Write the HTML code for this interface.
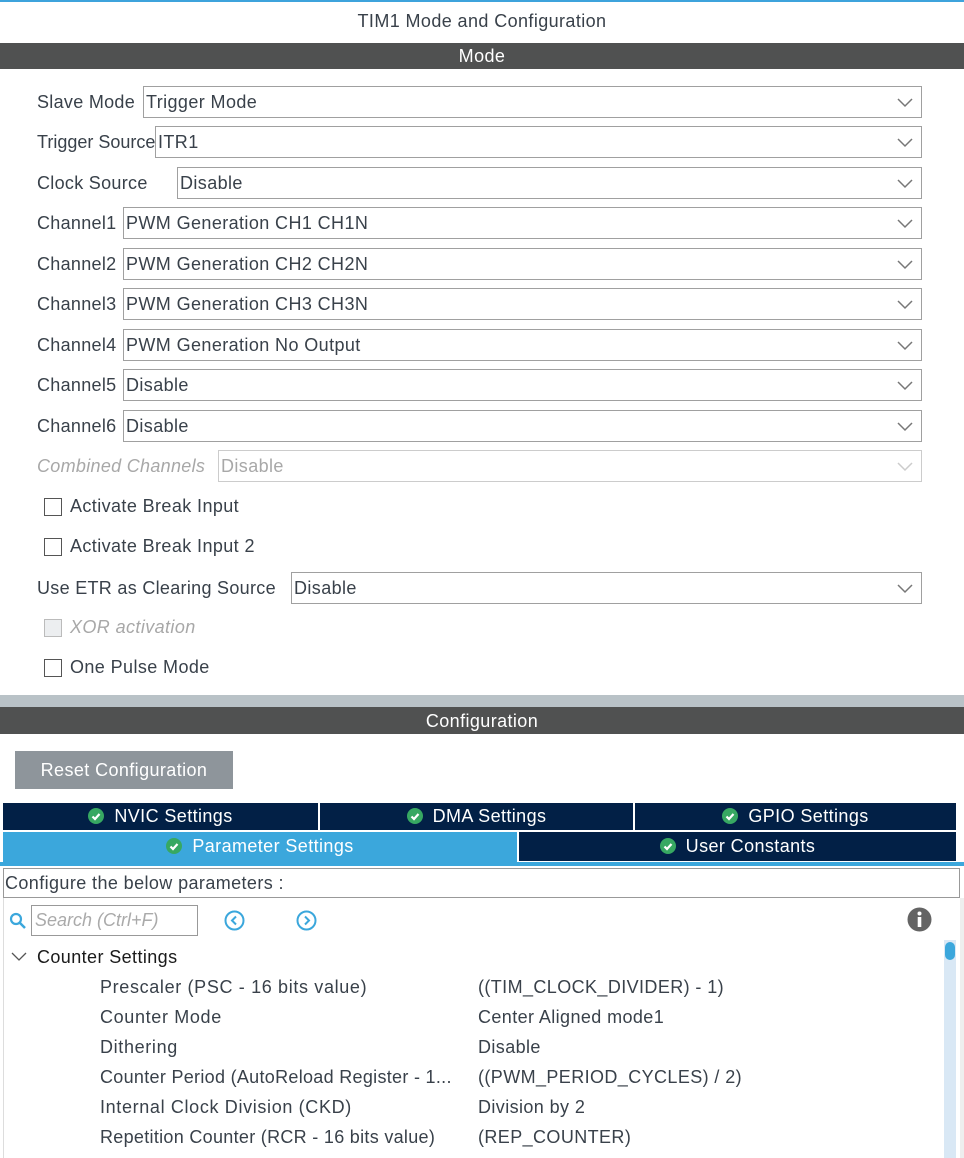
<!DOCTYPE html>
<html><head><meta charset="utf-8"><style>
*{margin:0;padding:0;box-sizing:border-box}
body{width:964px;height:1158px;background:#fff;position:relative;overflow:hidden;font-family:"Liberation Sans",Arial,sans-serif;color:#39414a;font-size:18px;letter-spacing:.4px}
.a{position:absolute;white-space:nowrap}
.lbl{position:absolute;left:37px;line-height:32px;white-space:nowrap;letter-spacing:.3px}
.sel{position:absolute;height:32px;right:42px;border:1px solid #a0a0a0;background:#fff;line-height:30px;padding-left:2px}
.sel svg{position:absolute;right:8px;top:11px}
.dis{color:#a8a8a8}
.cb{position:absolute;left:44px;width:18px;height:18px;border:1.5px solid #555;background:#fff}
.bar{position:absolute;left:0;width:964px;background:#505151;color:#fff;text-align:center}
.tab{position:absolute;background:#022046;color:#fff;text-align:center;height:27px;line-height:27px}
.ck{display:inline-block;width:16px;height:16px;vertical-align:-2px;margin-right:10px;position:relative}
.ck svg{position:absolute;left:0;top:0}
.row{position:absolute;left:100px;line-height:30px;letter-spacing:.65px}
.val{position:absolute;left:478px;line-height:30px;letter-spacing:.4px}
</style></head><body>
<div class="a" style="left:0;top:0;width:964px;height:2px;background:#3ea3dc"></div>
<div class="a" style="left:0;top:11px;width:964px;text-align:center;color:#39414a">TIM1 Mode and Configuration</div>
<div class="bar" style="top:43px;height:26px;line-height:26px">Mode</div>

<div class="lbl" style="top:86px">Slave Mode</div><div class="sel" style="top:86px;left:143px">Trigger Mode<svg width="16" height="10"><path d="M1 1l7 7 7-7" fill="none" stroke="#777" stroke-width="1.5"/></svg></div>
<div class="lbl" style="top:126px;letter-spacing:0">Trigger Source</div><div class="sel" style="top:126px;left:155px">ITR1<svg width="16" height="10"><path d="M1 1l7 7 7-7" fill="none" stroke="#777" stroke-width="1.5"/></svg></div>
<div class="lbl" style="top:167px">Clock Source</div><div class="sel" style="top:167px;left:177px">Disable<svg width="16" height="10"><path d="M1 1l7 7 7-7" fill="none" stroke="#777" stroke-width="1.5"/></svg></div>
<div class="lbl" style="top:207px">Channel1</div><div class="sel" style="top:207px;left:123px">PWM Generation CH1 CH1N<svg width="16" height="10"><path d="M1 1l7 7 7-7" fill="none" stroke="#777" stroke-width="1.5"/></svg></div>
<div class="lbl" style="top:248px">Channel2</div><div class="sel" style="top:248px;left:123px">PWM Generation CH2 CH2N<svg width="16" height="10"><path d="M1 1l7 7 7-7" fill="none" stroke="#777" stroke-width="1.5"/></svg></div>
<div class="lbl" style="top:288px">Channel3</div><div class="sel" style="top:288px;left:123px">PWM Generation CH3 CH3N<svg width="16" height="10"><path d="M1 1l7 7 7-7" fill="none" stroke="#777" stroke-width="1.5"/></svg></div>
<div class="lbl" style="top:329px">Channel4</div><div class="sel" style="top:329px;left:123px">PWM Generation No Output<svg width="16" height="10"><path d="M1 1l7 7 7-7" fill="none" stroke="#777" stroke-width="1.5"/></svg></div>
<div class="lbl" style="top:369px">Channel5</div><div class="sel" style="top:369px;left:123px">Disable<svg width="16" height="10"><path d="M1 1l7 7 7-7" fill="none" stroke="#777" stroke-width="1.5"/></svg></div>
<div class="lbl" style="top:410px">Channel6</div><div class="sel" style="top:410px;left:123px">Disable<svg width="16" height="10"><path d="M1 1l7 7 7-7" fill="none" stroke="#777" stroke-width="1.5"/></svg></div>
<div class="lbl dis" style="top:450px;font-style:italic">Combined Channels</div><div class="sel dis" style="top:450px;left:218px;border-color:#ccc">Disable<svg width="16" height="10"><path d="M1 1l7 7 7-7" fill="none" stroke="#ccc" stroke-width="1.5"/></svg></div>

<div class="cb" style="top:498px"></div><div class="a" style="left:70px;top:496px">Activate Break Input</div>
<div class="cb" style="top:538px"></div><div class="a" style="left:70px;top:536px">Activate Break Input 2</div>
<div class="lbl" style="top:572px">Use ETR as Clearing Source</div><div class="sel" style="top:572px;left:291px">Disable<svg width="16" height="10"><path d="M1 1l7 7 7-7" fill="none" stroke="#777" stroke-width="1.5"/></svg></div>
<div class="cb" style="top:619px;border-color:#bbb;background:#eceef0"></div><div class="a dis" style="left:70px;top:617px;font-style:italic">XOR activation</div>
<div class="cb" style="top:659px"></div><div class="a" style="left:70px;top:657px">One Pulse Mode</div>

<div class="a" style="left:0;top:695px;width:964px;height:12px;background:#b9c2c7"></div>
<div class="bar" style="top:707px;height:27px;line-height:28px">Configuration</div>
<div class="a" style="left:15px;top:751px;width:218px;height:38px;background:#8e959b;color:#fff;line-height:38px;text-align:center">Reset Configuration</div>

<div class="tab" style="left:3px;top:803px;width:315px"><span class="ck"><svg width="16" height="16"><circle cx="8" cy="8" r="8" fill="#37a862"/><path d="M4.5 8.5l2.5 2.5 4.5-5" fill="none" stroke="#fff" stroke-width="2.2"/></svg></span>NVIC Settings</div>
<div class="tab" style="left:320px;top:803px;width:313px"><span class="ck"><svg width="16" height="16"><circle cx="8" cy="8" r="8" fill="#37a862"/><path d="M4.5 8.5l2.5 2.5 4.5-5" fill="none" stroke="#fff" stroke-width="2.2"/></svg></span>DMA Settings</div>
<div class="tab" style="left:635px;top:803px;width:321px"><span class="ck"><svg width="16" height="16"><circle cx="8" cy="8" r="8" fill="#37a862"/><path d="M4.5 8.5l2.5 2.5 4.5-5" fill="none" stroke="#fff" stroke-width="2.2"/></svg></span>GPIO Settings</div>
<div class="tab" style="left:3px;top:832px;width:514px;height:31px;line-height:29px;background:#3ba7dc"><span class="ck"><svg width="16" height="16"><circle cx="8" cy="8" r="8" fill="#37a862"/><path d="M4.5 8.5l2.5 2.5 4.5-5" fill="none" stroke="#fff" stroke-width="2.2"/></svg></span>Parameter Settings</div>
<div class="tab" style="left:519px;top:832px;width:437px;height:29px;line-height:29px"><span class="ck"><svg width="16" height="16"><circle cx="8" cy="8" r="8" fill="#37a862"/><path d="M4.5 8.5l2.5 2.5 4.5-5" fill="none" stroke="#fff" stroke-width="2.2"/></svg></span>User Constants</div>
<div class="a" style="left:0;top:862px;width:964px;height:4px;background:#3ba7dc"></div>

<div class="a" style="left:3px;top:868px;width:957px;height:30px;border:1px solid #999;line-height:28px;padding-left:1px">Configure the below parameters :</div>
<div class="a" style="left:3px;top:898px;width:1px;height:260px;background:#ddd"></div>
<svg class="a" style="left:9px;top:912px" width="18" height="18"><circle cx="7" cy="7" r="5" fill="none" stroke="#3ba7dc" stroke-width="2.2"/><path d="M11 11l5 5" stroke="#3ba7dc" stroke-width="2.5"/></svg>
<div class="a" style="left:31px;top:905px;width:167px;height:31px;border:1.5px solid #999;color:#aaa;font-style:italic;line-height:28px;padding-left:3px;letter-spacing:0">Search (Ctrl+F)</div>
<svg class="a" style="left:224px;top:910px" width="21" height="21"><circle cx="10.5" cy="10.5" r="9" fill="none" stroke="#3ba7dc" stroke-width="2"/><path d="M12 6.5l-4 4 4 4" fill="none" stroke="#3ba7dc" stroke-width="2"/></svg>
<svg class="a" style="left:296px;top:910px" width="21" height="21"><circle cx="10.5" cy="10.5" r="9" fill="none" stroke="#3ba7dc" stroke-width="2"/><path d="M9 6.5l4 4-4 4" fill="none" stroke="#3ba7dc" stroke-width="2"/></svg>
<svg class="a" style="left:907px;top:907px" width="25" height="25"><circle cx="12.5" cy="12.5" r="12" fill="#646464"/><circle cx="12.5" cy="6.5" r="2" fill="#fff"/><rect x="10.7" y="10" width="3.6" height="10" fill="#fff"/></svg>

<div class="a" style="left:944px;top:940px;width:12px;height:218px;background:#d9e8f5"></div>
<div class="a" style="left:945px;top:942px;width:10px;height:18px;background:#3ba7dc;border-radius:5px"></div>
<div class="a" style="left:960px;top:898px;width:4px;height:260px;background:#eee"></div>

<svg class="a" style="left:11px;top:952px" width="16" height="10"><path d="M1 1l7 7 7-7" fill="none" stroke="#555" stroke-width="1.3"/></svg>
<div class="a" style="left:37px;top:942px;line-height:30px;color:#1a1a1a">Counter Settings</div>
<div class="row" style="top:972px">Prescaler (PSC - 16 bits value)</div><div class="val" style="top:972px">((TIM_CLOCK_DIVIDER) - 1)</div>
<div class="row" style="top:1002px">Counter Mode</div><div class="val" style="top:1002px">Center Aligned mode1</div>
<div class="row" style="top:1032px">Dithering</div><div class="val" style="top:1032px">Disable</div>
<div class="row" style="top:1062px;letter-spacing:.3px">Counter Period (AutoReload Register - 1...</div><div class="val" style="top:1062px">((PWM_PERIOD_CYCLES) / 2)</div>
<div class="row" style="top:1092px">Internal Clock Division (CKD)</div><div class="val" style="top:1092px">Division by 2</div>
<div class="row" style="top:1122px;letter-spacing:.3px">Repetition Counter (RCR - 16 bits value)</div><div class="val" style="top:1122px">(REP_COUNTER)</div>
</body></html>
